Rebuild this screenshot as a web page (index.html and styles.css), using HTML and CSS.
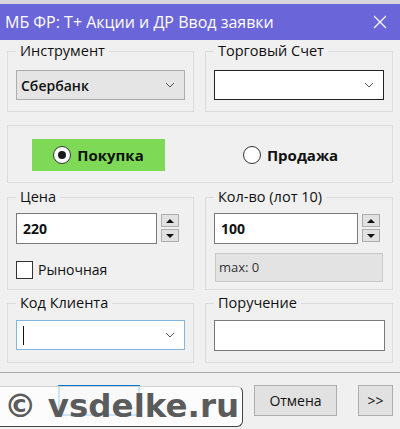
FILE: index.html
```html
<!DOCTYPE html>
<html lang="ru">
<head>
  <meta charset="UTF-8" />
  <meta name="viewport" content="width=device-width, initial-scale=1.0"/>
  <title>Ввод заявки</title>
  <link rel="stylesheet" href="styles.css">
</head>
<body>
  <div class="window">
    <div class="titlebar">
      <span class="title">МБ ФР: Т+ Акции и ДР Ввод заявки</span>
      <svg class="close" width="14" height="14" viewBox="0 0 14 14">
        <path d="M1 1 L13 13 M13 1 L1 13" stroke="#fff" stroke-width="1.2" fill="none"/>
      </svg>
    </div>

    <div class="content">
      <div class="row first">
        <fieldset class="group">
          <legend>Инструмент</legend>
          <div class="combo readonly">
            <span class="combo-text">Сбербанк</span>
            <svg class="chevron" width="10" height="6" viewBox="0 0 10 6"><path d="M1 1 L5 5 L9 1" stroke="#555" fill="none"/></svg>
          </div>
        </fieldset>
        <fieldset class="group">
          <legend>Торговый Счет</legend>
          <div class="combo dark">
            <span class="combo-text"></span>
            <svg class="chevron" width="10" height="6" viewBox="0 0 10 6"><path d="M1 1 L5 5 L9 1" stroke="#555" fill="none"/></svg>
          </div>
        </fieldset>
      </div>

      <div class="side-box">
        <div class="side active">
          <span class="radio checked"></span>
          <span class="side-label">Покупка</span>
        </div>
        <div class="side">
          <span class="radio"></span>
          <span class="side-label">Продажа</span>
        </div>
      </div>

      <div class="row third">
        <fieldset class="group">
          <legend>Цена</legend>
          <div class="spin-row">
            <div class="input num left">220</div>
            <div class="spinner">
              <span class="spin-btn"><span class="tri up"></span></span>
              <span class="spin-btn"><span class="tri down"></span></span>
            </div>
          </div>
          <div class="check-row">
            <span class="checkbox"></span>
            <span>Рыночная</span>
          </div>
        </fieldset>
        <fieldset class="group">
          <legend>Кол-во (лот 10)</legend>
          <div class="spin-row">
            <div class="input num right">100</div>
            <div class="spinner">
              <span class="spin-btn"><span class="tri up"></span></span>
              <span class="spin-btn"><span class="tri down"></span></span>
            </div>
          </div>
          <div class="max-box">max: 0</div>
        </fieldset>
      </div>

      <div class="row fourth">
        <fieldset class="group">
          <legend>Код Клиента</legend>
          <div class="combo focused">
            <span class="caret"></span>
            <svg class="chevron" width="10" height="6" viewBox="0 0 10 6"><path d="M1 1 L5 5 L9 1" stroke="#555" fill="none"/></svg>
          </div>
        </fieldset>
        <fieldset class="group">
          <legend>Поручение</legend>
          <div class="input plain"></div>
        </fieldset>
      </div>
    </div>

    <div class="footer">
      <button class="btn default" title="Ввод"></button>
      <button class="btn cancel">Отмена</button>
      <button class="btn more">&gt;&gt;</button>
    </div>

    <div class="watermark">© vsdelke.ru</div>
  </div>
</body>
</html>
```

FILE: styles.css
```css
* {
  margin: 0;
  padding: 0;
  box-sizing: border-box;
}

body {
  background-color: #f0f0f0;
  font-family: 'Open Sans', 'Liberation Sans', sans-serif;
  font-size: 14px;
  color: #111;
}

.window {
  position: relative;
  width: 400px;
  height: 429px;
  overflow: hidden;
  border-top: 4px solid #d6d6dc;
}

.titlebar {
  height: 36px;
  background-color: #6a65d8;
  display: flex;
  align-items: center;
  justify-content: space-between;
  padding: 0 13px 0 5px;
}

.title {
  color: #fff;
  font-size: 16px;
  line-height: 20px;
}

.close {
  display: block;
}

.content {
  padding: 3px 7px 0;
}

.row {
  display: grid;
  grid-template-columns: 187px 188px;
  column-gap: 11px;
}

.group {
  border: 1px solid #dcdcdc;
  padding: 11px 8px 11px;
  min-width: 0;
}

.group legend {
  padding: 0 4px;
  font-size: 14.5px;
  line-height: 16px;
  color: #111;
}

.combo {
  height: 30px;
  display: flex;
  align-items: center;
  justify-content: space-between;
  padding: 0 9px 0 4px;
  border: 1px solid #7a7a7a;
  background: #fff;
}

.combo.readonly {
  background: #e5e5e5;
  border-color: #adadad;
}

.combo.dark {
  border-color: #222;
}

.combo.focused {
  border-color: #82b4e0;
  padding-left: 6px;
}

.combo-text {
  font-weight: 600;
}

.caret {
  width: 1px;
  height: 19px;
  background: #111;
}

.side-box {
  margin-top: 13px;
  border: 1px solid #dcdcdc;
  padding: 13px 35px 11px 24px;
  display: grid;
  grid-template-columns: 1fr 1fr;
  column-gap: 59px;
}

.side {
  height: 32px;
  display: flex;
  align-items: center;
  justify-content: center;
  gap: 6px;
}

.side.active {
  background-color: #7ed957;
}

.side-label {
  font-weight: 700;
  font-size: 15px;
}

.radio {
  width: 18px;
  height: 18px;
  border-radius: 50%;
  border: 1px solid #333;
  background: #fff;
  display: flex;
  align-items: center;
  justify-content: center;
}

.radio.checked::after {
  content: "";
  width: 8px;
  height: 8px;
  border-radius: 50%;
  background: #1a1a1a;
}

.third {
  margin-top: 6px;
}

.third .group {
  padding: 8px 8px 7px;
}

.spin-row {
  display: flex;
  gap: 4px;
}

.input {
  height: 31px;
  border: 1px solid #7a7a7a;
  background: #fff;
}

.input.num {
  font-weight: 700;
  line-height: 29px;
  padding-left: 6px;
}

.input.left {
  width: 141px;
}

.input.right {
  width: 144px;
}

.spinner {
  display: flex;
  flex-direction: column;
  gap: 2px;
  padding-top: 1px;
}

.spin-btn {
  width: 18px;
  height: 13px;
  background: #e1e1e1;
  border: 1px solid #adadad;
  display: flex;
  align-items: center;
  justify-content: center;
}

.tri {
  width: 0;
  height: 0;
  border-left: 4px solid transparent;
  border-right: 4px solid transparent;
}

.tri.up {
  border-bottom: 4px solid #111;
}

.tri.down {
  border-top: 4px solid #111;
}

.check-row {
  margin-top: 16px;
  display: flex;
  align-items: center;
  gap: 5px;
}

.checkbox {
  width: 17px;
  height: 18px;
  border: 1px solid #333;
  background: #fff;
}

.max-box {
  margin: 9px 1px 0;
  height: 29px;
  background: #e3e3e3;
  border: 1px solid #c8c8c8;
  font-size: 13px;
  line-height: 27px;
  padding-left: 3px;
  color: #333;
}

.fourth {
  margin-top: 5px;
}

.fourth .group {
  padding: 9px 8px 11px;
}

.input.plain {
  height: 31px;
  margin-right: -1px;
}

.footer {
  margin-top: 9px;
  border-top: 1px solid #a8a8a8;
  padding: 12px 7px 0 58px;
  display: flex;
}

.btn {
  height: 31px;
  font-family: inherit;
  font-size: 14px;
  background: #e1e1e1;
  border: 1px solid #adadad;
  color: #111;
}

.btn.default {
  width: 82px;
  border: 2px solid #0078d7;
}

.btn.cancel {
  width: 83px;
  margin-left: auto;
}

.btn.more {
  width: 35px;
  margin-left: 21px;
}

.watermark {
  position: absolute;
  left: 0;
  top: 382px;
  width: 243px;
  height: 41px;
  background: rgba(255, 255, 255, 0.8);
  border-right: 1px solid #444;
  border-bottom: 1px solid #444;
  border-top: 1px solid #d0d0d0;
  border-radius: 0 6px 6px 0;
  font-family: 'DejaVu Sans', sans-serif;
  font-weight: 700;
  font-size: 32.5px;
  line-height: 39px;
  padding-left: 4px;
  color: rgba(75, 75, 75, 0.92);
  white-space: nowrap;
}
```
